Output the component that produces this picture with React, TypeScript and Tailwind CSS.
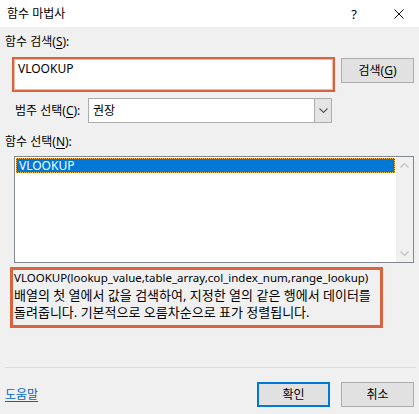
import React from 'react';

const fontStack = "font-['Noto_Sans','Noto_Sans_CJK_KR',sans-serif]";

const Mn: React.FC<{ children: React.ReactNode }> = ({ children }) => (
  <span className="underline underline-offset-2">{children}</span>
);

const Chevron: React.FC<{ dir: 'up' | 'down'; className?: string }> = ({ dir, className }) => (
  <svg width="9" height="6" viewBox="0 0 9 6" className={className}>
    <path
      d={dir === 'up' ? 'M0.5 5.5 L4.5 1.5 L8.5 5.5' : 'M0.5 0.5 L4.5 4.5 L8.5 0.5'}
      fill="none"
      stroke="currentColor"
      strokeWidth="1.2"
    />
  </svg>
);

const App: React.FC = () => {
  return (
    <div className={`w-[419px] h-[414px] bg-[#f0f0f0] text-[12px] leading-[16px] text-black flex flex-col ${fontStack}`}>
      {/* title bar */}
      <div className="h-[27px] bg-white flex items-center pl-[7px]">
        <span className="flex-1">함수 마법사</span>
        <span className="w-[10px] text-center text-[13px]">?</span>
        <span className="ml-[35px] mr-[15px] flex items-center">
          <svg width="10" height="10" viewBox="0 0 10 10">
            <path d="M0.5 0.5 L9.5 9.5 M9.5 0.5 L0.5 9.5" stroke="#111" strokeWidth="1" fill="none" />
          </svg>
        </span>
      </div>

      <div className="pl-[5px] mt-[7px]">
        함수 검색(<Mn>S</Mn>):
      </div>

      <div className="flex mt-[7px]">
        <div className="ml-[12px] w-[323px] h-[35px] border-[3px] border-[#d9633f] bg-white">
          <div className="pl-[3px] pt-[1px] outline outline-1 outline-[#f3b8a6] h-full">VLOOKUP</div>
        </div>
        <button className="ml-[6px] mt-[1px] w-[73px] h-[25px] border border-[#adadad] bg-[#e1e1e1] flex items-center justify-center">
          검색(<Mn>G</Mn>)
        </button>
      </div>

      <div className="flex items-center mt-[6px] h-[25px]">
        <span className="ml-[15px] w-[73px]">
          범주 선택(<Mn>C</Mn>):
        </span>
        <div className="w-[244px] h-[25px] border border-[#adadad] bg-white flex">
          <span className="flex-1 pl-[4px] flex items-center">권장</span>
          <span className="w-[17px] border-l border-[#adadad] bg-[#e5e5e5] flex items-center justify-center text-[#606060]">
            <Chevron dir="down" />
          </span>
        </div>
      </div>

      <div className="pl-[5px] mt-[11px]">
        함수 선택(<Mn>N</Mn>):
      </div>

      <div className="mt-[6px] ml-[14px] w-[400px] h-[107px] border border-[#828790] bg-white flex">
        <div className="flex-1 pt-px pl-px pr-px">
          <div className="h-[15px] bg-[#0078d7] text-white border border-dotted border-[#ffb54a] pl-[2px] flex items-center">
            VLOOKUP
          </div>
        </div>
        <div className="w-[17px] bg-[#f0f0f0] flex flex-col items-center justify-between py-[5px] text-[#c0c0c0]">
          <Chevron dir="up" />
          <Chevron dir="down" />
        </div>
      </div>

      <div className="mt-[4px] ml-[10px] w-[373px] h-[61px] border-[3px] border-[#d9633f] pl-px">
        <div className="mb-[1px] text-[11.5px] whitespace-nowrap">VLOOKUP(lookup_value,table_array,col_index_num,range_lookup)</div>
        <div className="text-[13px] leading-[17px] whitespace-nowrap">배열의 첫 열에서 값을 검색하여, 지정한 열의 같은 행에서 데이터를</div>
        <div className="text-[13px] leading-[17px] whitespace-nowrap">돌려줍니다. 기본적으로 오름차순으로 표가 정렬됩니다.</div>
      </div>

      <div className="mt-[39px] ml-[5px] mr-[3px] h-px bg-[#dcdcdc]" />

      <div className="mt-[14px] flex items-center h-[25px]">
        <a href="#" className="pl-[5px] text-[#0066cc] underline underline-offset-2">
          도움말
        </a>
        <button className="ml-auto w-[73px] h-[25px] border-2 border-[#0078d7] bg-[#e1e1e1] flex items-center justify-center">
          확인
        </button>
        <button className="ml-[11px] mr-[5px] w-[73px] h-[25px] border border-[#adadad] bg-[#e1e1e1] flex items-center justify-center">
          취소
        </button>
      </div>
    </div>
  );
};

export default App;
